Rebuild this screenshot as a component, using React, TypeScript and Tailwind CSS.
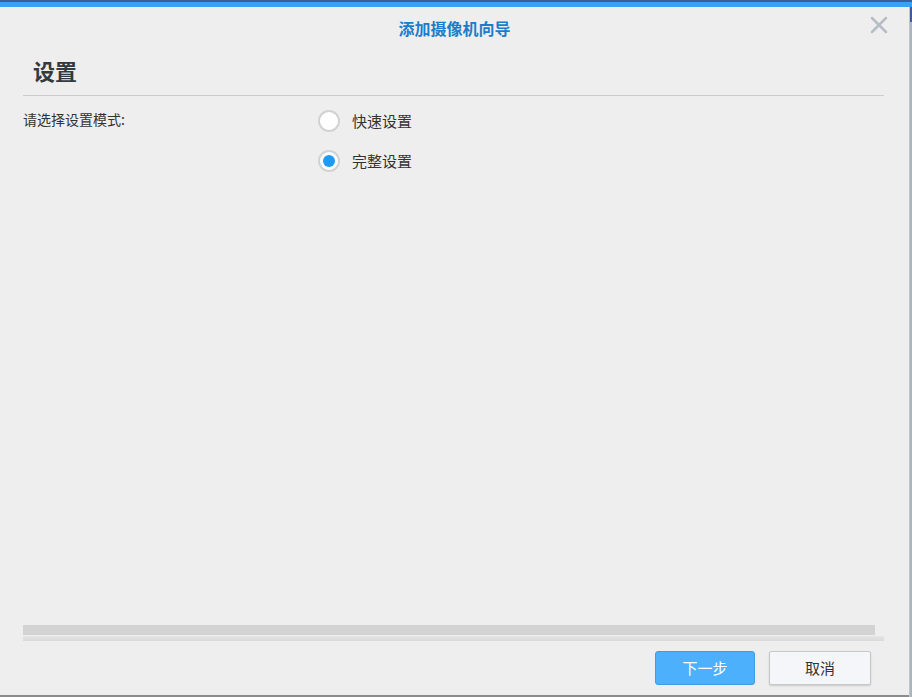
import { X } from 'lucide-react';

const FONT = { fontFamily: '"Noto Sans CJK SC", "Noto Sans", sans-serif' };

function Radio({ label, checked }: { label: string; checked?: boolean }) {
  return (
    <div className="flex h-[40px] items-center gap-[12px]">
      <div className="flex h-[22px] w-[22px] items-center justify-center rounded-full border-2 border-[#d2d2d2] bg-white">
        {checked && <div className="h-[12px] w-[12px] rounded-full bg-[#1e9cf5]" />}
      </div>
      <span className="text-[15px] leading-[20px] text-[#333]">{label}</span>
    </div>
  );
}

export default function App() {
  return (
    <div className="flex h-[697px] w-[912px] flex-col overflow-hidden bg-[#eeeeee]" style={FONT}>
      {/* top band */}
      <div className="h-[2px] bg-[#3b5f94]" />
      <div className="h-[5px] bg-[#39a0f5]" />

      <div className="flex flex-1">
        {/* dialog */}
        <div className="flex w-[909px] flex-col border-b-2 border-[#8c8c8c] bg-[#eeeeee]">
          {/* header */}
          <div className="relative flex h-[41px] items-center justify-center">
            <span className="text-[16px] font-bold text-[#1a7dcb]">添加摄像机向导</span>
            <X className="absolute right-[16px] top-[4px] h-[28px] w-[28px] text-[#b5bec8]" strokeWidth={2.2} />
          </div>

          {/* section title */}
          <div className="mt-[7px] px-[33px] text-[22px] font-bold leading-[30px] text-[#333a40]">设置</div>
          <div className="ml-[23px] mr-[25px] mt-[10px] h-px bg-[#cccccc]" />

          {/* form */}
          <div className="flex pl-[23px] pt-[5px]">
            <div className="mt-[8px] w-[295px] text-[14px] leading-[20px] text-[#333]">请选择设置模式:</div>
            <div className="flex flex-col">
              <Radio label="快速设置" />
              <Radio label="完整设置" checked />
            </div>
          </div>

          <div className="flex-1" />

          {/* footer */}
          <div className="ml-[23px] h-[10px] w-[852px] bg-[#d3d3d3]" />
          <div className="ml-[23px] mt-px h-[5px] w-[861px] bg-gradient-to-b from-[#e6e6e6] to-[#d9d9d9]" />
          <div className="mt-[10px] flex justify-end gap-[14px] pr-[38px]">
            <button className="h-[34px] w-[100px] rounded-[3px] border border-[#3c9de6] bg-[#4cb0fc] text-[15px] text-white">
              下一步
            </button>
            <button className="h-[34px] w-[102px] rounded-[2px] border border-[#c8c8c8] bg-[#f5f6fa] text-[15px] text-[#333] shadow-[0_1px_2px_rgba(0,0,0,0.15)]">
              取消
            </button>
          </div>
          <div className="h-[10px]" />
        </div>

        {/* background strip */}
        <div className="flex w-[3px] flex-col border-l border-[#c4c4c4] bg-[#aab5c1]">
          <div className="h-[15px] bg-[#3b5f94]" />
        </div>
      </div>
    </div>
  );
}
